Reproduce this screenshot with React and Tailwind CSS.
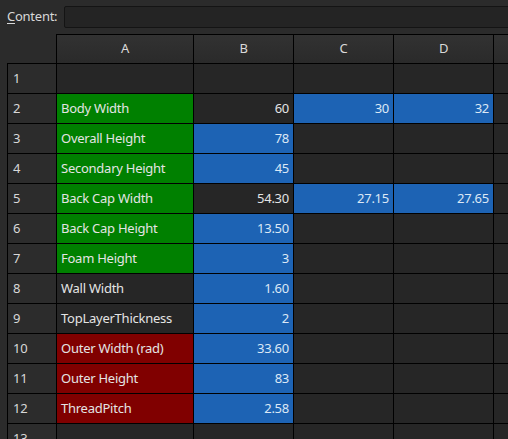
import React from 'react';

const G = 'bg-[#008000]';
const B = 'bg-[#1d63b4]';
const R = 'bg-[#800000]';

// [label, labelColor, b, bColor, c, cColor, d, dColor]
const rows = [
  ['', '', '', '', '', '', '', ''],
  ['Body Width', G, '60', '', '30', B, '32', B],
  ['Overall Height', G, '78', B, '', '', '', ''],
  ['Secondary Height', G, '45', B, '', '', '', ''],
  ['Back Cap Width', G, '54.30', '', '27.15', B, '27.65', B],
  ['Back Cap Height', G, '13.50', B, '', '', '', ''],
  ['Foam Height', G, '3', B, '', '', '', ''],
  ['Wall Width', '', '1.60', B, '', '', '', ''],
  ['TopLayerThickness', '', '2', B, '', '', '', ''],
  ['Outer Width (rad)', R, '33.60', B, '', '', '', ''],
  ['Outer Height', R, '83', B, '', '', '', ''],
  ['ThreadPitch', R, '2.58', B, '', '', '', ''],
  ['', '', '', '', '', '', '', ''],
];

function Cell({ text, color, right }) {
  return (
    <div
      className={`h-[29px] flex items-center px-[4px] truncate ${color || 'bg-[#262626]'} ${
        right ? 'justify-end' : 'justify-start'
      } ${color === B ? 'text-[#dce8f6]' : 'text-[#e4e4e4]'}`}
    >
      {text}
    </div>
  );
}

export default function App() {
  return (
    <div
      className="w-[508px] h-[439px] overflow-hidden bg-[#2b2b2b] text-[13px] tracking-[-0.25px] text-[#e4e4e4]"
      style={{ fontFamily: '"Noto Sans", "Open Sans", sans-serif' }}
    >
      {/* Content bar */}
      <div className="flex items-center h-[34px] pl-[7px] pb-[1px]">
        <span className="w-[57px] shrink-0 text-[#d8d8d8]">
          <span className="underline underline-offset-2">C</span>ontent:
        </span>
        <div className="flex-1 h-[22px] -mr-[4px] rounded-[2px] border border-[#141414] bg-[#242424]" />
      </div>

      {/* Sheet */}
      <div className="pl-[7px]">
        <div className="grid grid-cols-[48px_136px_99px_99px_99px_60px] gap-px bg-black pl-px pt-px w-[560px]">
          {/* corner */}
          <div className="h-[29px] -mt-px -ml-px bg-[#2b2b2b]" />
          {['A', 'B', 'C', 'D', ''].map((h, i) => (
            <div
              key={i}
              className="h-[28px] flex items-center justify-center bg-gradient-to-b from-[#323232] to-[#2a2a2a] text-[#dadada]"
            >
              {h}
            </div>
          ))}

          {rows.map((r, i) => (
            <React.Fragment key={i}>
              <div className="h-[29px] flex items-center pl-[5px] bg-[#2c2c2c] text-[#d8d8d8]">{i + 1}</div>
              <Cell text={r[0]} color={r[1]} />
              <Cell text={r[2]} color={r[3]} right />
              <Cell text={r[4]} color={r[5]} right />
              <Cell text={r[6]} color={r[7]} right />
              <Cell text="" color="" />
            </React.Fragment>
          ))}
        </div>
      </div>
    </div>
  );
}
